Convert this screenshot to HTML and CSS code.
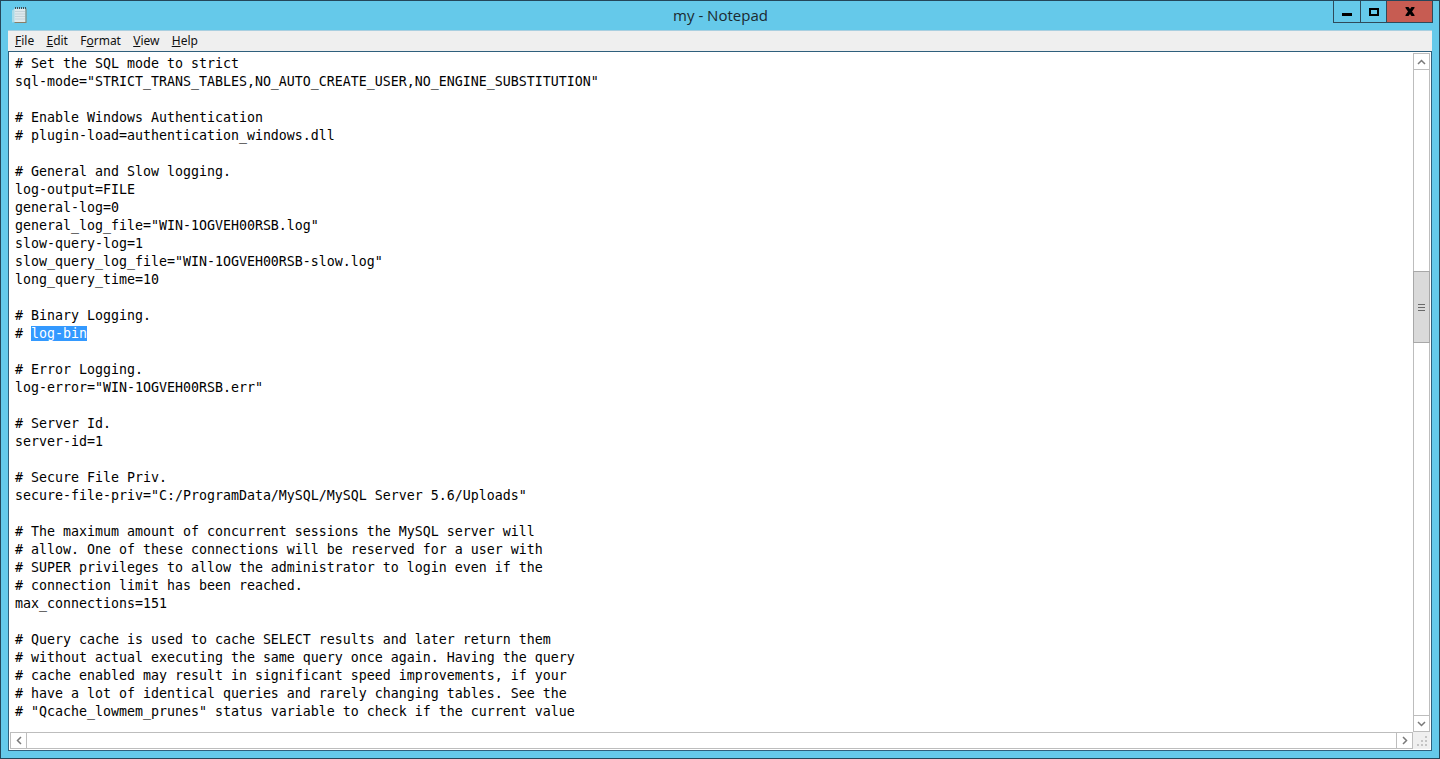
FILE: index.html
```html
<!DOCTYPE html>
<html lang="en">
<head>
<meta charset="utf-8">
<title>my - Notepad</title>
<link rel="stylesheet" href="styles.css">
</head>
<body>
<div class="window">
  <header class="titlebar">
    <svg class="app-icon" width="15" height="17" viewBox="0 0 15 17" aria-hidden="true">
      <path d="M0 3.500 3 1.500V15L0 15.500z" fill="#a9dbe8"/>
      <path d="M2.500 1.500h11v14h-11z" fill="#dfe9ec"/>
      <path d="M2.500 15.500h11.500M14 1.500V16" stroke="#8a7f66" fill="none"/>
      <path d="M3 4.500h10M3 7h10M3 9.500h10M3 12h10" stroke="#c5d3d9"/>
      <path d="M3 1h1M5 1h1M7 1h1M9 1h1M11 1h1M13 1h1" stroke="#3f4a50" stroke-width="2"/>
    </svg>
    <div class="title">my - Notepad</div>
    <div class="controls">
      <div class="ctl ctl-min"><span class="glyph-min"></span></div>
      <div class="ctl ctl-max"><span class="glyph-max"></span></div>
      <div class="ctl ctl-close">
        <svg width="10" height="9" viewBox="0 0 10 9" aria-hidden="true"><path d="M0.500 0H3.500L5 2 6.500 0H9.500V1L7 4.500 9.500 8V9H6.500L5 7 3.500 9H0.500V8L3 4.500.5 1z" fill="#000"/></svg>
      </div>
    </div>
  </header>
  <nav class="menubar">
    <span class="menu"><u>F</u>ile</span>
    <span class="menu"><u>E</u>dit</span>
    <span class="menu">F<u>o</u>rmat</span>
    <span class="menu"><u>V</u>iew</span>
    <span class="menu"><u>H</u>elp</span>
  </nav>
  <main class="client">
    <div class="editor-row">
<pre class="editor"># Set the SQL mode to strict
sql-mode="STRICT_TRANS_TABLES,NO_AUTO_CREATE_USER,NO_ENGINE_SUBSTITUTION"

# Enable Windows Authentication
# plugin-load=authentication_windows.dll

# General and Slow logging.
log-output=FILE
general-log=0
general_log_file="WIN-1OGVEH00RSB.log"
slow-query-log=1
slow_query_log_file="WIN-1OGVEH00RSB-slow.log"
long_query_time=10

# Binary Logging.
# <span class="sel">log-bin</span>

# Error Logging.
log-error="WIN-1OGVEH00RSB.err"

# Server Id.
server-id=1

# Secure File Priv.
secure-file-priv="C:/ProgramData/MySQL/MySQL Server 5.6/Uploads"

# The maximum amount of concurrent sessions the MySQL server will
# allow. One of these connections will be reserved for a user with
# SUPER privileges to allow the administrator to login even if the
# connection limit has been reached.
max_connections=151

# Query cache is used to cache SELECT results and later return them
# without actual executing the same query once again. Having the query
# cache enabled may result in significant speed improvements, if your
# have a lot of identical queries and rarely changing tables. See the
# "Qcache_lowmem_prunes" status variable to check if the current value</pre>
      <div class="vscroll">
        <div class="sb-btn sb-btn-v"><svg width="9" height="6" viewBox="0 0 9 6" aria-hidden="true"><path d="M1 5l3.500-3.500L8 5" class="chev"/></svg></div>
        <div class="track track-top"></div>
        <div class="thumb"><span class="grip"></span></div>
        <div class="track track-bottom"></div>
        <div class="sb-btn sb-btn-v"><svg width="9" height="6" viewBox="0 0 9 6" aria-hidden="true"><path d="M1 1l3.500 3.500L8 1" class="chev"/></svg></div>
      </div>
    </div>
    <div class="hscroll-row">
      <div class="hscroll">
        <div class="sb-btn sb-btn-h"><svg width="6" height="9" viewBox="0 0 6 9" aria-hidden="true"><path d="M5 1L1.500 4.500 5 8" class="chev"/></svg></div>
        <div class="track track-h"></div>
        <div class="sb-btn sb-btn-h"><svg width="6" height="9" viewBox="0 0 6 9" aria-hidden="true"><path d="M1 1l3.500 3.500L1 8" class="chev"/></svg></div>
      </div>
      <div class="sizer">
        <svg width="12" height="12" viewBox="0 0 12 12" aria-hidden="true"><path d="M9 1h2v2H9zM9 5h2v2H9zM5 5h2v2H5zM9 9h2v2H9zM5 9h2v2H5zM1 9h2v2H1z" fill="#c4c4c4"/></svg>
      </div>
    </div>
  </main>
</div>
</body>
</html>
```

FILE: styles.css
```css
* { box-sizing: border-box; }
html, body { margin: 0; padding: 0; height: 100%; overflow: hidden; }
body { background: #65c9ea; }
.window {
  width: 1440px;
  height: 759px;
  display: flex;
  flex-direction: column;
  background: #65c9ea;
  border: 1px solid #24465a;
  padding: 0 7px 7px 7px;
}
.titlebar {
  height: 29px;
  flex: none;
  display: flex;
  align-items: flex-start;
  position: relative;
}
.app-icon { margin: 6px 0 0 4px; flex: none; }
.title {
  position: absolute;
  left: 1px;
  right: 0;
  top: 3px;
  text-align: center;
  font: 15px/22px "Open Sans", "Noto Sans", sans-serif;
  color: #1b2a30;
}
.controls {
  margin-left: auto;
  display: flex;
  height: 22px;
  position: relative;
  left: 1px;
  border: 1px solid #2f4a5a;
  border-top: 0;
}
.ctl { display: flex; align-items: center; justify-content: center; height: 100%; }
.ctl-min { width: 27px; border-right: 1px solid #2f4a5a; }
.ctl-max { width: 26px; border-right: 1px solid #2f4a5a; }
.ctl-close { width: 45px; background: #c75c52; }
.glyph-min { width: 10px; height: 3px; background: #000; margin-top: 5px; }
.glyph-max { width: 10px; height: 8px; border: 2px solid #000; }
.menubar {
  height: 21px;
  flex: none;
  background: #efefef;
  display: flex;
  align-items: center;
  padding: 0 0 1px 2px;
  border-top: 1px solid #a9cfe0;
  font: 12px/18px "Noto Sans", "Open Sans", sans-serif;
  color: #111;
}
.menu { padding: 0 5px; margin-right: 2.250px; }
.client {
  flex: 1;
  min-height: 0;
  display: flex;
  flex-direction: column;
  background: #fff;
  border: 1px solid #2f5f7c;
  padding: 1px;
}
.editor-row { flex: 1; min-height: 0; display: flex; }
.editor {
  flex: 1;
  min-width: 0;
  margin: 0;
  padding: 2px 0 0 5px;
  overflow: hidden;
  font: 13.29px/18px "DejaVu Sans Mono", monospace;
  color: #000;
  background: #fff;
}
.sel { background: #3399ff; color: #fff; }
.vscroll {
  width: 17px;
  flex: none;
  display: flex;
  flex-direction: column;
}
.sb-btn {
  flex: none;
  display: flex;
  align-items: center;
  justify-content: center;
  background: #fff;
  border: 1px solid #bdbdbd;
}
.sb-btn-v { height: 17px; }
.sb-btn-h { width: 17px; height: 17px; }
.chev { fill: none; stroke: #7a7a7a; stroke-width: 1.5; }
.track { background: #fff; border-left: 1px solid #bdbdbd; border-right: 1px solid #bdbdbd; }
.track-top { height: 201px; flex: none; }
.track-bottom { flex: 1; }
.thumb {
  height: 72px;
  flex: none;
  background: #dadada;
  border: 1px solid #a8a8a8;
  display: flex;
  align-items: center;
  justify-content: center;
}
.grip {
  width: 7px;
  height: 7px;
  background: repeating-linear-gradient(#6a6a6a 0 1px, #dadada 1px 3px);
}
.hscroll-row { height: 17px; flex: none; display: flex; }
.hscroll { flex: 1; display: flex; }
.track-h { flex: 1; border: 0; border-top: 1px solid #bdbdbd; border-bottom: 1px solid #bdbdbd; }
.sizer { width: 17px; flex: none; background: #efefef; display: flex; align-items: flex-end; justify-content: flex-end; padding: 0 2px 2px 0; }
```
